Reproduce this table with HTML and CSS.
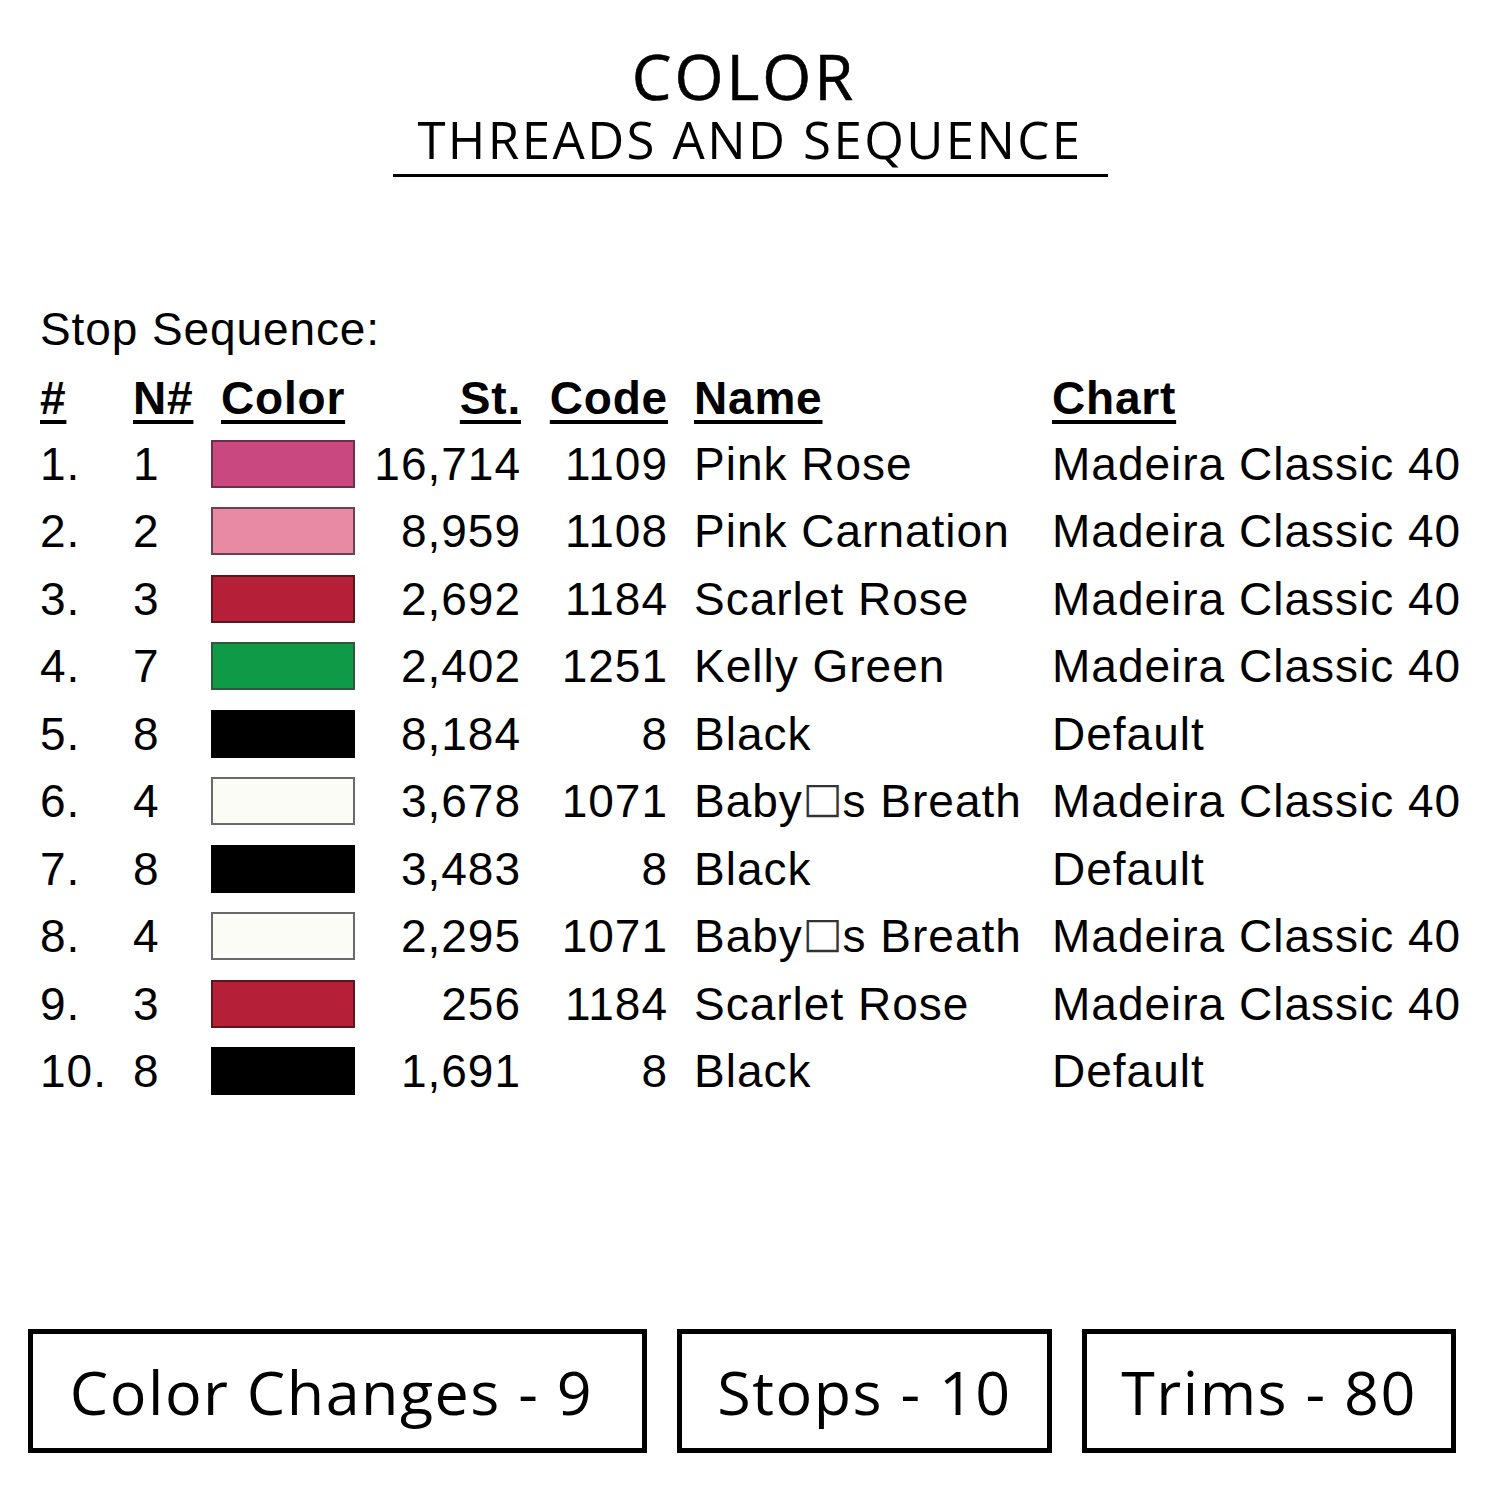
FILE: index.html
```html
<!DOCTYPE html>
<html>
<head>
<meta charset="utf-8">
<link rel="stylesheet" href="styles.css">
</head>
<body>
<div class="page">
  <header class="title">
    <div class="title-main">COLOR</div>
    <div class="title-sub">THREADS AND SEQUENCE</div>
  </header>

  <section class="seq">
    <div class="seq-label">Stop Sequence:</div>
    <div class="table">
      <div class="row head">
        <div class="c-num"><u>#</u></div>
        <div class="c-n"><u>N#</u></div>
        <div class="c-color"><u>Color</u></div>
        <div class="c-st"><u>St.</u></div>
        <div class="c-code"><u>Code</u></div>
        <div class="c-name"><u>Name</u></div>
        <div class="c-chart"><u>Chart</u></div>
      </div>
      <div class="row">
        <div class="c-num">1.</div><div class="c-n">1</div>
        <div class="c-color"><span class="swatch sw-pinkrose"></span></div>
        <div class="c-st">16,714</div><div class="c-code">1109</div>
        <div class="c-name">Pink Rose</div><div class="c-chart">Madeira Classic 40</div>
      </div>
      <div class="row">
        <div class="c-num">2.</div><div class="c-n">2</div>
        <div class="c-color"><span class="swatch sw-carnation"></span></div>
        <div class="c-st">8,959</div><div class="c-code">1108</div>
        <div class="c-name">Pink Carnation</div><div class="c-chart">Madeira Classic 40</div>
      </div>
      <div class="row">
        <div class="c-num">3.</div><div class="c-n">3</div>
        <div class="c-color"><span class="swatch sw-scarlet"></span></div>
        <div class="c-st">2,692</div><div class="c-code">1184</div>
        <div class="c-name">Scarlet Rose</div><div class="c-chart">Madeira Classic 40</div>
      </div>
      <div class="row">
        <div class="c-num">4.</div><div class="c-n">7</div>
        <div class="c-color"><span class="swatch sw-green"></span></div>
        <div class="c-st">2,402</div><div class="c-code">1251</div>
        <div class="c-name">Kelly Green</div><div class="c-chart">Madeira Classic 40</div>
      </div>
      <div class="row">
        <div class="c-num">5.</div><div class="c-n">8</div>
        <div class="c-color"><span class="swatch sw-black"></span></div>
        <div class="c-st">8,184</div><div class="c-code">8</div>
        <div class="c-name">Black</div><div class="c-chart">Default</div>
      </div>
      <div class="row">
        <div class="c-num">6.</div><div class="c-n">4</div>
        <div class="c-color"><span class="swatch sw-white"></span></div>
        <div class="c-st">3,678</div><div class="c-code">1071</div>
        <div class="c-name">Baby<span class="missing">□</span>s Breath</div><div class="c-chart">Madeira Classic 40</div>
      </div>
      <div class="row">
        <div class="c-num">7.</div><div class="c-n">8</div>
        <div class="c-color"><span class="swatch sw-black"></span></div>
        <div class="c-st">3,483</div><div class="c-code">8</div>
        <div class="c-name">Black</div><div class="c-chart">Default</div>
      </div>
      <div class="row">
        <div class="c-num">8.</div><div class="c-n">4</div>
        <div class="c-color"><span class="swatch sw-white"></span></div>
        <div class="c-st">2,295</div><div class="c-code">1071</div>
        <div class="c-name">Baby<span class="missing">□</span>s Breath</div><div class="c-chart">Madeira Classic 40</div>
      </div>
      <div class="row">
        <div class="c-num">9.</div><div class="c-n">3</div>
        <div class="c-color"><span class="swatch sw-scarlet"></span></div>
        <div class="c-st">256</div><div class="c-code">1184</div>
        <div class="c-name">Scarlet Rose</div><div class="c-chart">Madeira Classic 40</div>
      </div>
      <div class="row">
        <div class="c-num">10.</div><div class="c-n">8</div>
        <div class="c-color"><span class="swatch sw-black"></span></div>
        <div class="c-st">1,691</div><div class="c-code">8</div>
        <div class="c-name">Black</div><div class="c-chart">Default</div>
      </div>
    </div>
  </section>

  <footer class="stats">
    <div class="stat stat-1">Color Changes - 9</div>
    <div class="stat stat-2">Stops - 10</div>
    <div class="stat stat-3">Trims - 80</div>
  </footer>
</div>
</body>
</html>
```

FILE: styles.css
```css
html, body {
  margin: 0;
  padding: 0;
  background: #ffffff;
}

.page {
  width: 1500px;
  height: 1500px;
  display: flex;
  flex-direction: column;
  color: #000;
}

.title {
  display: flex;
  flex-direction: column;
  align-items: center;
  padding-top: 42px;
  font-family: "Open Sans", "Noto Sans", sans-serif;
}

.title-main {
  font-size: 63px;
  font-weight: 500;
  line-height: 68px;
  letter-spacing: 3px;
  padding-right: 12px;
  -webkit-text-stroke: 0.6px #000;
}

.title-sub {
  font-size: 51px;
  font-weight: 400;
  line-height: 58px;
  letter-spacing: 2.4px;
  width: 715px;
  text-align: center;
  border-bottom: 3px solid #000;
  padding-bottom: 6px;
}

.seq {
  padding-left: 40px;
  padding-top: 122px;
  font-family: "Liberation Sans", Arial, sans-serif;
  font-size: 46px;
}

.seq-label {
  line-height: 60px;
  letter-spacing: 0.9px;
}

.table {
  display: flex;
  flex-direction: column;
}

.row {
  display: grid;
  grid-template-columns: 93px 78px 144px 166px 147px 384px auto;
  align-items: center;
  height: 67.5px;
  letter-spacing: 1px;
}

.row.head {
  box-sizing: border-box;
  height: 71px;
  padding-top: 6px;
  font-weight: bold;
  letter-spacing: 0.8px;
}

.row.head u {
  text-decoration-thickness: 4px;
  text-underline-offset: 6px;
}

.row.head .c-color { padding-left: 10px; }
.c-st { text-align: right; }
.c-code { text-align: right; }
.c-name { padding-left: 26px; white-space: nowrap; }
.c-chart { white-space: nowrap; }

.swatch {
  display: block;
  width: 144px;
  height: 48px;
  box-sizing: border-box;
  border: 2px solid rgba(0, 0, 0, 0.55);
}

.sw-pinkrose { background: #c9487f; border-color: #6e2f4a; }
.sw-carnation { background: #e88aa3; border-color: #6e3f4d; }
.sw-scarlet { background: #b52038; border-color: #5a1720; }
.sw-green { background: #0f9a48; border-color: #2d5a3a; }
.sw-black { background: #000; border-color: #000; }
.sw-white { background: #fcfcf6; border-color: #6a6a6a; }

.missing {
  font-family: "DejaVu Sans", sans-serif;
  font-size: 42px;
  letter-spacing: 0;
  line-height: 1;
  color: #333;
  vertical-align: 5px;
}

.stats {
  margin-top: auto;
  margin-bottom: 47px;
  padding-left: 28px;
  display: grid;
  grid-template-columns: 619px 375px 374px;
  column-gap: 30px;
  font-family: "Open Sans", "Noto Sans", sans-serif;
}

.stat {
  box-sizing: border-box;
  height: 124px;
  border: 5px solid #000;
  display: flex;
  align-items: center;
  justify-content: center;
  font-size: 61px;
  font-weight: 400;
  letter-spacing: 1.5px;
}

.stat-1 { padding-right: 12px; }
```
